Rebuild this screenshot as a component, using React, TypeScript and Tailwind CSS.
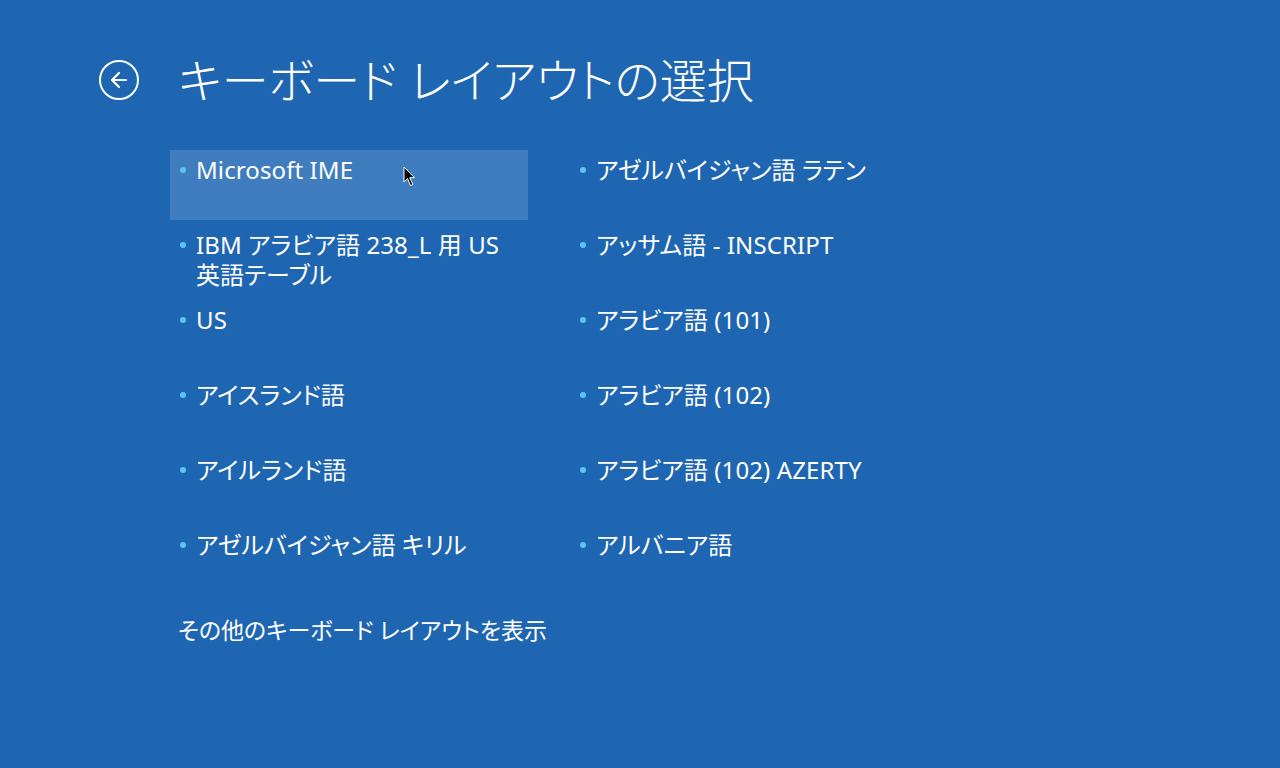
import { ArrowLeft } from 'lucide-react'

const leftItems = [
	'Microsoft IME',
	'IBM アラビア語 238_L 用 US 英語テーブル',
	'US',
	'アイスランド語',
	'アイルランド語',
	'アゼルバイジャン語 キリル',
]

const rightItems = [
	'アゼルバイジャン語 ラテン',
	'アッサム語 - INSCRIPT',
	'アラビア語 (101)',
	'アラビア語 (102)',
	'アラビア語 (102) AZERTY',
	'アルバニア語',
]

const Cursor = () => (
	<svg width="14" height="22" viewBox="0 0 14 22" className="absolute left-[233px] top-[16px]">
		<path
			d="M1 1 L1 16 L4.5 12.5 L7.5 19.5 L9.8 18.5 L6.8 11.7 L11.5 11.7 Z"
			fill="black"
			stroke="white"
			strokeWidth="1"
			strokeLinejoin="round"
		/>
	</svg>
)

const LayoutItem = ({ label, hovered }: { label: string; hovered?: boolean }) => (
	<div
		className={`relative flex h-[70px] items-start pl-[10px] pr-[8px] pt-[5px] ${
			hovered ? 'bg-[#3f7dbf]' : ''
		}`}
	>
		<span className="mt-[12px] mr-[10px] h-[6px] w-[6px] shrink-0 rounded-full bg-[#5ac6ee]" />
		<span className="text-[24px] leading-[30px] tracking-[0.1px] text-white">{label}</span>
		{hovered && <Cursor />}
	</div>
)

export default function App() {
	return (
		<div
			className="h-[768px] w-[1280px] overflow-hidden bg-[#1f66b2] text-white [font-feature-settings:'palt']"
			style={{ fontFamily: '"Noto Sans", "Noto Sans CJK JP", sans-serif' }}
		>
			<div className="flex items-center pt-[52px] pl-[99px]">
				<button className="flex h-[40px] w-[40px] items-center justify-center rounded-full border-[2.5px] border-white">
					<ArrowLeft size={24} strokeWidth={2.2} />
				</button>
				<h1 className="ml-[39px] text-[47px] leading-[56px] font-light">キーボード レイアウトの選択</h1>
			</div>

			<div className="mt-[42px] ml-[170px] grid w-[758px] grid-cols-2 gap-x-[42px] gap-y-[5px]">
				{leftItems.map((label, i) => (
					<div key={label} className="contents">
						<LayoutItem label={label} hovered={i === 0} />
						<LayoutItem label={rightItems[i]} />
					</div>
				))}
			</div>

			<div className="mt-[20px] ml-[178px] text-[23px] leading-[30px]">その他のキーボード レイアウトを表示</div>
		</div>
	)
}
